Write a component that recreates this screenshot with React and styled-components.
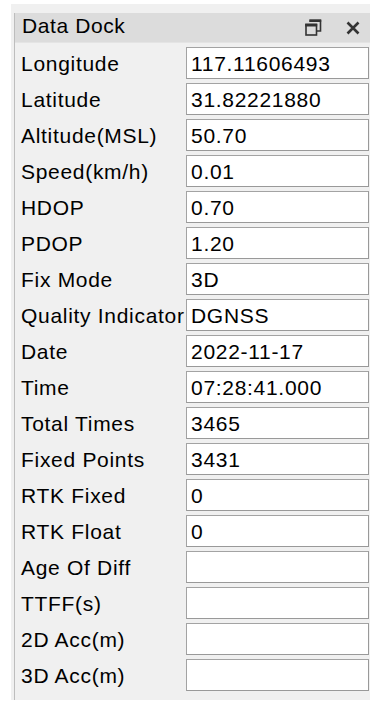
import React from "react";
import styled, { createGlobalStyle } from "styled-components";

const Global = createGlobalStyle`
  html, body { margin: 0; padding: 0; background: #ffffff; }
  body { font-family: "Liberation Sans", Arial, sans-serif; }
`;

const Panel = styled.div`
  margin: 4px 0 0 11px;
  width: 359px;
  height: 696px;
  box-sizing: border-box;
  background: #f0f0f0;
  padding: 9px 0 0 3px;
  display: flex;
`;

const Inner = styled.div`
  flex: 1;
  border-left: 1px solid #bdbdbd;
  display: flex;
  flex-direction: column;
`;

const TitleBar = styled.div`
  height: 30px;
  box-sizing: border-box;
  background: #dcdcdc;
  display: flex;
  align-items: center;
  padding: 0 10px 3px 7px;
  border-bottom: 1px solid #e4e4e4;
`;

const Title = styled.span`
  flex: 1;
  font-size: 21px;
  letter-spacing: 0.6px;
  color: #000;
`;

const IconButton = styled.span`
  display: inline-flex;
  width: ${(p) => p.$w}px;
  height: 18px;
  align-items: center;
  justify-content: center;
  margin-left: ${(p) => p.$ml}px;
  margin-top: 3px;
`;

const Rows = styled.div`
  display: flex;
  flex-direction: column;
  gap: 4px;
  padding: 4px 1px 0 0;
`;

const Row = styled.div`
  display: flex;
  align-items: center;
  height: 32px;
`;

const Label = styled.span`
  width: 171px;
  padding-left: 6px;
  padding-top: 2px;
  box-sizing: border-box;
  font-size: 21px;
  letter-spacing: 0.7px;
  color: #000;
  white-space: nowrap;
`;

const Field = styled.div`
  width: 183px;
  height: 32px;
  box-sizing: border-box;
  background: #ffffff;
  border: 1px solid #a3a3a3;
  border-right-color: #999;
  border-bottom-color: #999;
  padding: 2px 0 0 4px;
  display: flex;
  align-items: center;
  font-size: 21px;
  letter-spacing: 0.7px;
  color: #000;
`;

const RestoreIcon = () => (
  <svg width="17" height="17" viewBox="0 0 17 17">
    <path d="M5 1.5h10.5v10.5h-3.5" fill="none" stroke="#333" strokeWidth="1.6" />
    <rect x="4.2" y="0.4" width="12" height="2.6" fill="#333" />
    <rect x="1" y="5.5" width="10.5" height="10.5" fill="none" stroke="#333" strokeWidth="1.6" />
    <rect x="0.2" y="4.7" width="12" height="2.8" fill="#333" />
  </svg>
);

const CloseIcon = () => (
  <svg width="14" height="14" viewBox="0 0 14 14">
    <path d="M1.5 1.5L12.5 12.5M12.5 1.5L1.5 12.5" stroke="#333" strokeWidth="2.6" strokeLinecap="butt" />
  </svg>
);

const data = [
  ["Longitude", "117.11606493"],
  ["Latitude", "31.82221880"],
  ["Altitude(MSL)", "50.70"],
  ["Speed(km/h)", "0.01"],
  ["HDOP", "0.70"],
  ["PDOP", "1.20"],
  ["Fix Mode", "3D"],
  ["Quality Indicator", "DGNSS"],
  ["Date", "2022-11-17"],
  ["Time", "07:28:41.000"],
  ["Total Times", "3465"],
  ["Fixed Points", "3431"],
  ["RTK Fixed", "0"],
  ["RTK Float", "0"],
  ["Age Of Diff", ""],
  ["TTFF(s)", ""],
  ["2D Acc(m)", ""],
  ["3D Acc(m)", ""],
];

export default function App() {
  return (
    <>
      <Global />
      <Panel>
        <Inner>
          <TitleBar>
            <Title>Data Dock</Title>
            <IconButton $w={17} $ml={0}>
              <RestoreIcon />
            </IconButton>
            <IconButton $w={14} $ml={24}>
              <CloseIcon />
            </IconButton>
          </TitleBar>
          <Rows>
            {data.map(([k, v]) => (
              <Row key={k}>
                <Label>{k}</Label>
                <Field>{v}</Field>
              </Row>
            ))}
          </Rows>
        </Inner>
      </Panel>
    </>
  );
}
